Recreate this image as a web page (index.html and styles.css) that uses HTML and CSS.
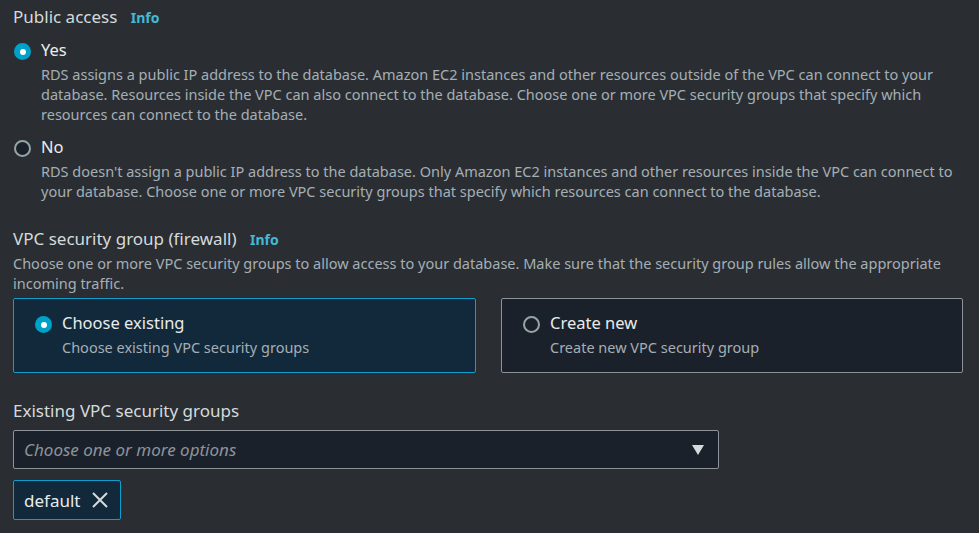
FILE: index.html
```html
<!DOCTYPE html>
<html>
<head>
<meta charset="utf-8">
<link rel="stylesheet" href="styles.css">
</head>
<body>
<div class="page">
  <section class="field">
    <div class="label">Public access <span class="info">Info</span></div>
    <div class="radio-group">
      <div class="radio-item">
        <span class="radio checked"></span>
        <div class="radio-body">
          <div class="radio-title">Yes</div>
          <div class="desc">RDS assigns a public IP address to the database. Amazon EC2 instances and other resources outside of the VPC can connect to your database. Resources inside the VPC can also connect to the database. Choose one or more VPC security groups that specify which resources can connect to the database.</div>
        </div>
      </div>
      <div class="radio-item">
        <span class="radio"></span>
        <div class="radio-body">
          <div class="radio-title">No</div>
          <div class="desc">RDS doesn't assign a public IP address to the database. Only Amazon EC2 instances and other resources inside the VPC can connect to your database. Choose one or more VPC security groups that specify which resources can connect to the database.</div>
        </div>
      </div>
    </div>
  </section>

  <section class="field vpc">
    <div class="label">VPC security group (firewall) <span class="info">Info</span></div>
    <div class="desc">Choose one or more VPC security groups to allow access to your database. Make sure that the security group rules allow the appropriate incoming traffic.</div>
    <div class="tiles">
      <div class="tile selected">
        <span class="radio checked"></span>
        <div class="radio-body">
          <div class="radio-title">Choose existing</div>
          <div class="desc">Choose existing VPC security groups</div>
        </div>
      </div>
      <div class="tile">
        <span class="radio"></span>
        <div class="radio-body">
          <div class="radio-title">Create new</div>
          <div class="desc">Create new VPC security group</div>
        </div>
      </div>
    </div>
  </section>

  <section class="field existing">
    <div class="label">Existing VPC security groups</div>
    <div class="select">
      <span class="placeholder">Choose one or more options</span>
      <svg class="caret" width="12" height="10" viewBox="0 0 12 10"><path d="M0 0 H12 L6 10 Z" fill="#d5dbdb"/></svg>
    </div>
    <div class="token">
      <span>default</span>
      <svg class="close" width="18" height="18" viewBox="0 0 18 18"><path d="M2 2 L16 16 M16 2 L2 16" stroke="#d5dbdb" stroke-width="2" fill="none"/></svg>
    </div>
  </section>
</div>
</body>
</html>
```

FILE: styles.css
```css
html, body {
  margin: 0;
  padding: 0;
  background: #2a2e33;
}
body {
  font-family: "Noto Sans", "Open Sans", sans-serif;
  color: #d5dbdb;
  width: 979px;
  height: 533px;
  overflow: hidden;
}
.page {
  padding: 6px 16px 0 13px;
}
.label {
  font-size: 17px;
  line-height: 22px;
  color: #d5dbdb;
}
.info {
  color: #44b9d6;
  font-weight: 700;
  font-size: 14px;
  margin-left: 9px;
}
.desc {
  font-size: 14.5px;
  line-height: 20px;
  color: #a5aeb5;
}
.radio-group {
  margin-top: 10px;
  display: flex;
  flex-direction: column;
  gap: 12px;
}
.radio-item {
  display: flex;
  gap: 10px;
}
.radio {
  flex: none;
  width: 13px;
  height: 13px;
  border: 2px solid #95a5a6;
  border-radius: 50%;
  background: #1b212b;
  margin-top: 4px;
  margin-left: 1px;
  position: relative;
}
.radio.checked {
  background: #00a1c9;
  border-color: #00a1c9;
}
.radio.checked::after {
  content: "";
  position: absolute;
  left: 3.5px;
  top: 3.5px;
  width: 6px;
  height: 6px;
  border-radius: 50%;
  background: #fff;
}
.radio-title {
  font-size: 16.5px;
  line-height: 22px;
  color: #e9ecec;
  margin-bottom: 3px;
}
.vpc {
  margin-top: 27px;
}
.vpc > .desc {
  margin-top: 2px;
}
.tiles {
  margin-top: 5px;
  display: grid;
  grid-template-columns: 463px 462px;
  gap: 25px;
}
.tile {
  height: 75px;
  box-sizing: border-box;
  border: 1px solid #8d9399;
  border-radius: 2px;
  background: #1b212b;
  display: flex;
  gap: 10px;
  padding: 13px 20px 12px;
}
.tile .radio-title {
  margin-bottom: 3px;
}
.tile.selected {
  background: #12293b;
  border-color: #0f9fcf;
}
.existing {
  margin-top: 27px;
}
.select {
  margin-top: 8px;
  width: 706px;
  height: 39px;
  box-sizing: border-box;
  border: 1px solid #8d9399;
  border-radius: 2px;
  background: #1b212b;
  display: flex;
  align-items: center;
  justify-content: space-between;
  padding: 0 14px 0 10px;
}
.placeholder {
  font-style: italic;
  font-size: 17px;
  color: #8d9399;
}
.caret {
  display: block;
}
.token {
  margin-top: 11px;
  display: inline-flex;
  align-items: center;
  gap: 11px;
  height: 40px;
  box-sizing: border-box;
  padding: 0 11px 0 10px;
  border: 1px solid #0f9fcf;
  border-radius: 2px;
  background: #12293b;
  font-size: 17px;
  color: #e9ecec;
}
.close {
  display: block;
}
```
